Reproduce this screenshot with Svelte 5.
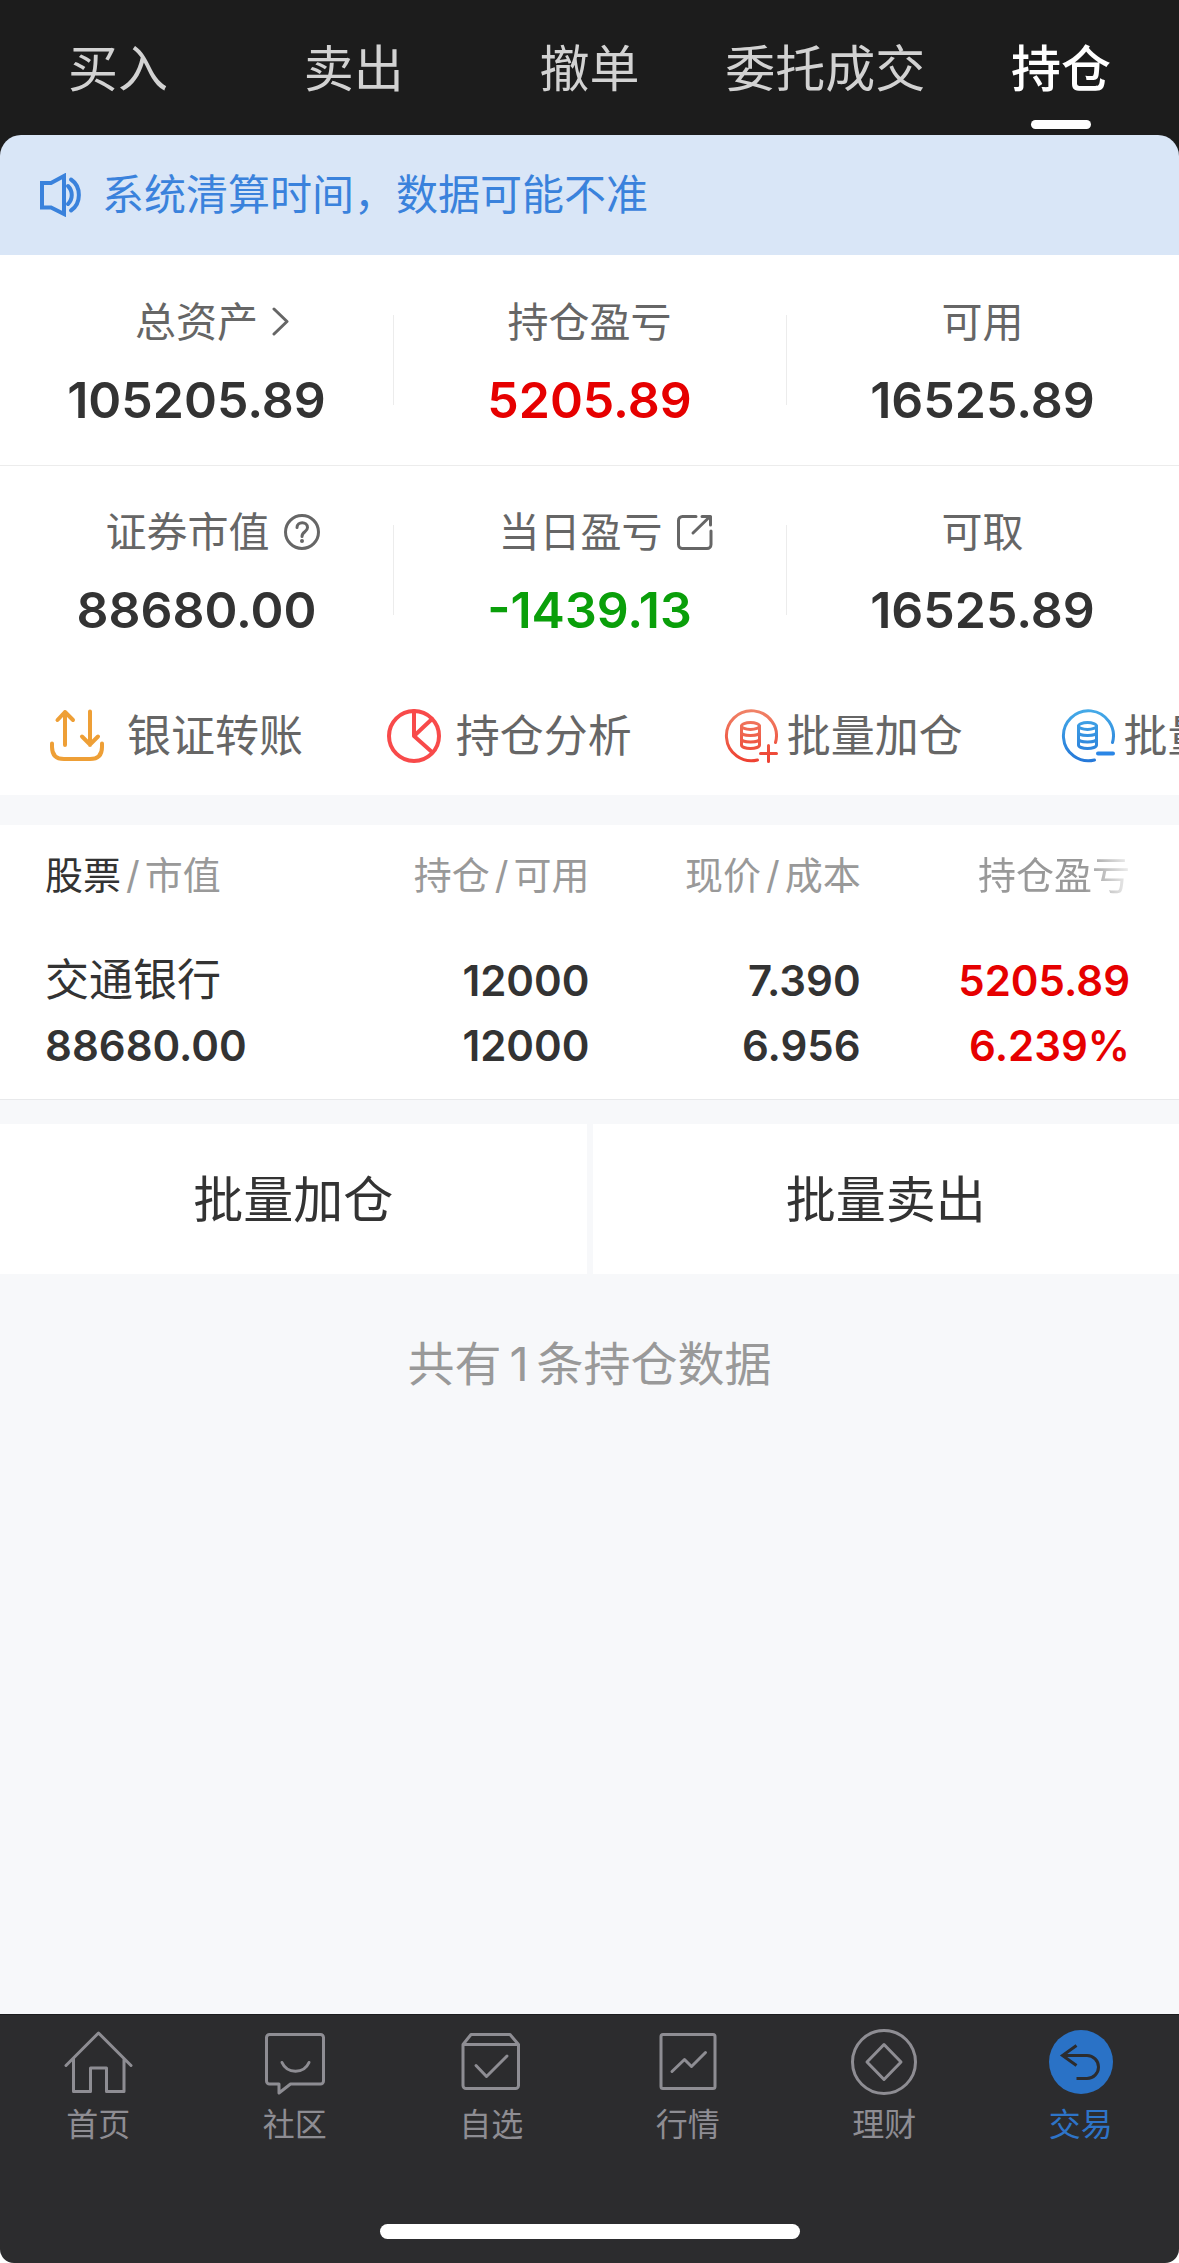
<script lang="ts">
	type Stat = { label: string; value: string; icon?: 'chevron' | 'help' | 'share'; tone?: 'up' | 'down' };

	const tabs = ['买入', '卖出', '撤单', '委托成交', '持仓'];
	let activeTab = $state('持仓');

	const stats: Stat[][] = [
		[
			{ label: '总资产', value: '105205.89', icon: 'chevron' },
			{ label: '持仓盈亏', value: '5205.89', tone: 'up' },
			{ label: '可用', value: '16525.89' }
		],
		[
			{ label: '证券市值', value: '88680.00', icon: 'help' },
			{ label: '当日盈亏', value: '-1439.13', icon: 'share', tone: 'down' },
			{ label: '可取', value: '16525.89' }
		]
	];

	const holdings = [
		{
			name: '交通银行',
			marketValue: '88680.00',
			amount: '12000',
			available: '12000',
			price: '7.390',
			cost: '6.956',
			profit: '5205.89',
			profitRate: '6.239%'
		}
	];

	const navItems = [
		{ id: 'home', label: '首页' },
		{ id: 'community', label: '社区' },
		{ id: 'favorites', label: '自选' },
		{ id: 'market', label: '行情' },
		{ id: 'wealth', label: '理财' },
		{ id: 'trade', label: '交易' }
	];
</script>

{#snippet coins()}
	<ellipse cx="26.5" cy="17" rx="9" ry="3.5" />
	<path d="M17.5 17v19c0 2 4 3.5 9 3.5s9-1.5 9-3.5V17" />
	<path d="M17.5 23.5c0 2 4 3 9 3s9-1 9-3M17.5 30c0 2 4 3 9 3s9-1 9-3" />
{/snippet}

<div class="page">
	<header>
		<nav class="tabs">
			{#each tabs as tab}
				<button class:active={tab === activeTab} onclick={() => (activeTab = tab)}>{tab}</button>
			{/each}
		</nav>
		<div class="notice">
			<svg width="42" height="44" viewBox="0 0 42 44" aria-hidden="true">
				<path d="M24 3v38L11 34.5H2V10h9z" />
				<path d="M28 13c5 5 5 13 0 18M31 6.500c10.500 7 10.500 24 0 31" />
			</svg>
			<p>系统清算时间，数据可能不准</p>
		</div>
	</header>

	<main>
		<section class="summary">
			{#each stats as row}
				<div class="stat-row">
					{#each row as stat}
						<div class="stat">
							{#if stat.icon}
								<button class="label">
									{stat.label}
									{#if stat.icon === 'chevron'}
										<svg width="18" height="36" viewBox="0 0 18 36" aria-hidden="true">
											<path d="M2 5l13 12.5L2 30" />
										</svg>
									{:else if stat.icon === 'help'}
										<svg width="36" height="36" viewBox="0 0 36 36" aria-hidden="true">
											<circle cx="18" cy="18" r="16.5" />
											<path d="M13 13.5c0-6.500 10.500-6.500 10.500 0 0 4.500-5.500 4-5.500 9" />
											<circle class="dot" cx="18" cy="27" r="2" />
										</svg>
									{:else}
										<svg width="36" height="36" viewBox="0 0 36 36" aria-hidden="true">
											<path d="M19 2.500H5.500a4 4 0 0 0-4 4v24a4 4 0 0 0 4 4H30a4 4 0 0 0 4-4V17" />
											<path d="M16 19L33 2.500M25 2.500h8.500V11" />
										</svg>
									{/if}
								</button>
							{:else}
								<span class="label">{stat.label}</span>
							{/if}
							<strong class={stat.tone}>{stat.value}</strong>
						</div>
					{/each}
				</div>
			{/each}
		</section>

		<div class="actions">
			<button>
				<svg class="transfer" width="68" height="54" viewBox="0 0 68 54" aria-hidden="true">
					<path d="M15 36V3M7.500 11L15 3l8 8M40 2.500V36M32 27.500l8 8 8-8" />
					<path d="M2 34.500V38c0 8 4 12 12 12h26c8 0 12-4 12-12v-3.500" />
				</svg>
				银证转账
			</button>
			<button>
				<svg class="pie" width="60" height="54" viewBox="0 0 60 54" aria-hidden="true">
					<circle cx="27" cy="27" r="25" />
					<path d="M27 2v25L45 10M27 27l18.500 16.500" />
				</svg>
				持仓分析
			</button>
			<button>
				<svg class="coin" width="54" height="54" viewBox="0 0 54 54" stroke="url(#add-stroke)" aria-hidden="true">
					<linearGradient id="add-stroke" gradientUnits="userSpaceOnUse" x1="0" y1="0" x2="0" y2="54">
						<stop offset="0" stop-color="#f08468" />
						<stop offset="1" stop-color="#ee3f30" />
					</linearGradient>
					<path d="M51.500 33.500A25 25 0 1 0 33.500 51" />
					{@render coins()}
					<path d="M36.500 44.500h16M44.500 36.500v16" />
				</svg>
				批量加仓
			</button>
			<button>
				<svg class="coin" width="54" height="54" viewBox="0 0 54 54" stroke="url(#sell-stroke)" aria-hidden="true">
					<linearGradient id="sell-stroke" gradientUnits="userSpaceOnUse" x1="0" y1="0" x2="0" y2="54">
						<stop offset="0" stop-color="#45abe8" />
						<stop offset="1" stop-color="#2577d8" />
					</linearGradient>
					<path d="M51.500 33.500A25 25 0 1 0 33.500 51" />
					{@render coins()}
					<path class="minus" d="M37 44.500h15" />
				</svg>
				批量卖出
			</button>
		</div>

		<table>
			<thead>
				<tr>
					<th><b>股票</b><i>/</i>市值</th>
					<th>持仓<i>/</i>可用</th>
					<th>现价<i>/</i>成本</th>
					<th><span class="fade">持仓盈亏</span></th>
				</tr>
			</thead>
			<tbody>
				{#each holdings as item}
					<tr>
						<td><span class="name">{item.name}</span>{item.marketValue}</td>
						<td><span>{item.amount}</span>{item.available}</td>
						<td><span>{item.price}</span>{item.cost}</td>
						<td class="up"><span>{item.profit}</span>{item.profitRate}</td>
					</tr>
				{/each}
			</tbody>
		</table>

		<div class="batch">
			<button>批量加仓</button>
			<button>批量卖出</button>
		</div>

		<p class="count">共有<span>{holdings.length}</span>条持仓数据</p>
	</main>

	<footer>
		<nav class="bottom-nav">
			{#each navItems as item}
				<a href="#{item.id}" class:current={item.id === 'trade'}>
					<svg width="72" height="72" viewBox="0 0 72 72" aria-hidden="true">
						{#if item.id === 'home'}
							<path d="M4 39.500L36.500 7 69 39.500M11.500 33v32.500h17V42h16v23.500H62V33" />
						{:else if item.id === 'community'}
							<path d="M10.500 8.500h51a3 3 0 0 1 3 3V55a3 3 0 0 1-3 3H31.500L20 67v-9h-9.500a3 3 0 0 1-3-3V11.500a3 3 0 0 1 3-3z" />
							<path d="M23 36.500c5 11.500 22 11.500 27 0" />
						{:else if item.id === 'favorites'}
							<path d="M8 18.500L16 8.500h39l8.500 10v41a3 3 0 0 1-3 3H11a3 3 0 0 1-3-3zM8 18.500h55.500" />
							<path d="M21 39.500l10.500 11L52 30" />
						{:else if item.id === 'market'}
							<rect x="9" y="8.5" width="54" height="54" rx="2" />
							<path d="M20 45.500l12.500-12 7 7 14-14" />
						{:else if item.id === 'wealth'}
							<circle cx="36" cy="36" r="31.5" />
							<path d="M36 18.500L53 36 36 53.500 19 36z" />
						{:else}
							<circle class="disc" cx="36" cy="36" r="32" />
							<path class="arrow" d="M31.500 19.500l-14 10 14 10M17.500 29.500H42a11.500 11.500 0 0 1 0 23H31.500" />
						{/if}
					</svg>
					{item.label}
				</a>
			{/each}
		</nav>
		<div class="home-bar"></div>
	</footer>
</div>

<style>
	:global(body) {
		background: #fff;
	}

	.page {
		display: flex;
		flex-direction: column;
		min-height: 100vh;
		color: #333;
		font-family: Inter, 'Noto Sans CJK SC', sans-serif;
	}

	button {
		padding: 0;
		border: 0;
		background: none;
		color: inherit;
		font: inherit;
		cursor: pointer;
	}

	svg {
		flex: none;
		fill: none;
		stroke-linecap: round;
		stroke-linejoin: round;
	}

	p {
		margin: 0;
	}

	header {
		background: #1c1c1c;
	}

	.tabs {
		display: grid;
		grid-template-columns: repeat(5, 1fr);
	}

	.tabs button {
		display: flex;
		flex-direction: column;
		align-items: center;
		height: 135px;
		padding-top: 39px;
		box-sizing: border-box;
		color: #d2d2d2;
		font-size: 50px;
		line-height: 60px;
	}

	.tabs button.active {
		color: #fff;
		font-weight: 500;
	}

	.tabs button.active::after {
		content: '';
		width: 60px;
		height: 9px;
		margin-top: 21px;
		border-radius: 5px;
		background: #fff;
	}

	.notice {
		display: flex;
		align-items: center;
		gap: 20px;
		height: 120px;
		padding: 0 40px;
		border-radius: 21px 21px 0 0;
		background: #d9e6f7;
		color: #3a82dc;
		font-size: 42px;
		line-height: 60px;
	}

	.notice svg {
		stroke: #3a82dc;
		stroke-width: 4;
		stroke-linejoin: miter;
	}

	main {
		flex: 1;
		background: #f7f8fa;
	}

	.summary,
	.actions,
	table {
		background: #fff;
	}

	.stat-row {
		display: grid;
		grid-template-columns: repeat(3, 1fr);
		align-items: center;
		height: 210px;
		padding-top: 2px;
		box-sizing: border-box;
	}

	.stat-row + .stat-row {
		box-shadow: inset 0 1px #ececec;
	}

	.stat {
		position: relative;
		display: flex;
		flex-direction: column;
		align-items: center;
		gap: 18px;
	}

	.stat + .stat::before {
		content: '';
		position: absolute;
		top: 23px;
		left: 0;
		width: 1px;
		height: 90px;
		background: #ececec;
	}

	.label {
		display: flex;
		align-items: center;
		gap: 14px;
		color: #666;
		font-size: 41px;
		line-height: 60px;
	}

	.label svg {
		margin-right: -32px;
		stroke: #666;
		stroke-width: 3;
	}

	.label .dot {
		fill: #666;
		stroke: none;
	}

	.stat strong {
		font-size: 50px;
		font-weight: 600;
		line-height: 60px;
	}

	.up,
	.stat .up {
		color: #e60000;
	}

	.stat .down {
		color: #0a9f0a;
	}

	.actions {
		display: flex;
		height: 120px;
		overflow: hidden;
	}

	.actions button {
		display: flex;
		flex: 0 0 calc(100% / 3.5);
		align-items: center;
		gap: 9px;
		box-sizing: border-box;
		padding: 2px 0 0 50px;
		color: #666;
		font-size: 44px;
		line-height: 60px;
		white-space: nowrap;
	}

	.actions svg {
		stroke-width: 4;
	}

	.actions .transfer {
		stroke: #ee9f36;
	}

	.actions .pie {
		stroke: #f84a4a;
	}

	.actions .coin {
		stroke-width: 3;
	}

	.actions .minus {
		stroke: #2a86e6;
		stroke-width: 4;
	}

	table {
		width: 100%;
		margin-top: 30px;
		border-bottom: 1px solid #e8e9eb;
		border-spacing: 0;
		table-layout: fixed;
	}

	th,
	td {
		padding: 0;
		text-align: right;
	}

	th {
		width: 20%;
		height: 99px;
		color: #999;
		font-size: 38px;
		font-weight: 400;
		line-height: 60px;
	}

	th:nth-child(3) {
		width: 23%;
	}

	th:first-child {
		width: 30%;
	}

	th:last-child {
		width: 27%;
	}

	th:first-child,
	td:first-child {
		padding-left: 45px;
		box-sizing: border-box;
		text-align: left;
	}

	th:last-child,
	td:last-child {
		padding-right: 49px;
		box-sizing: border-box;
	}

	th b {
		color: #333;
		font-weight: 400;
	}

	th i {
		margin: 0 5px;
		font-style: normal;
	}

	.fade {
		mask-image: linear-gradient(to right, #000 70%, rgba(0, 0, 0, 0.15));
	}

	td {
		padding: 24px 0 21px;
		font-size: 42px;
		font-weight: 600;
		line-height: 65px;
	}

	td span {
		display: block;
	}

	td .name {
		font-size: 44px;
		font-weight: 400;
	}

	.batch {
		display: grid;
		grid-template-columns: 1fr 1fr;
		gap: 6px;
		margin-top: 24px;
	}

	.batch button {
		height: 150px;
		padding-top: 2px;
		background: #fff;
		font-size: 50px;
		line-height: 60px;
	}

	.count {
		padding: 60px 0;
		color: #999;
		font-size: 47px;
		line-height: 60px;
		text-align: center;
	}

	.count span {
		margin: 0 8px;
	}

	footer {
		padding-bottom: 24px;
		border-top: 1px solid #1c1c1e;
		border-radius: 0 0 14px 14px;
		background: #2c2c2e;
	}

	.bottom-nav {
		display: grid;
		grid-template-columns: repeat(6, 1fr);
		height: 209px;
	}

	.bottom-nav a {
		display: flex;
		flex-direction: column;
		align-items: center;
		gap: 7px;
		padding-top: 11px;
		color: #8e8d93;
		font-size: 32px;
		line-height: 40px;
		text-decoration: none;
	}

	.bottom-nav svg {
		stroke: #8e8d93;
		stroke-width: 3;
	}

	.bottom-nav a.current {
		color: #2e74c8;
	}

	.bottom-nav .disc {
		fill: #2a72c6;
		stroke: none;
	}

	.bottom-nav .arrow {
		stroke: #2c2c2e;
		stroke-linecap: butt;
		stroke-linejoin: miter;
	}

	.home-bar {
		width: 420px;
		max-width: 60%;
		height: 15px;
		margin: 0 auto;
		border-radius: 8px;
		background: #fff;
	}
</style>
